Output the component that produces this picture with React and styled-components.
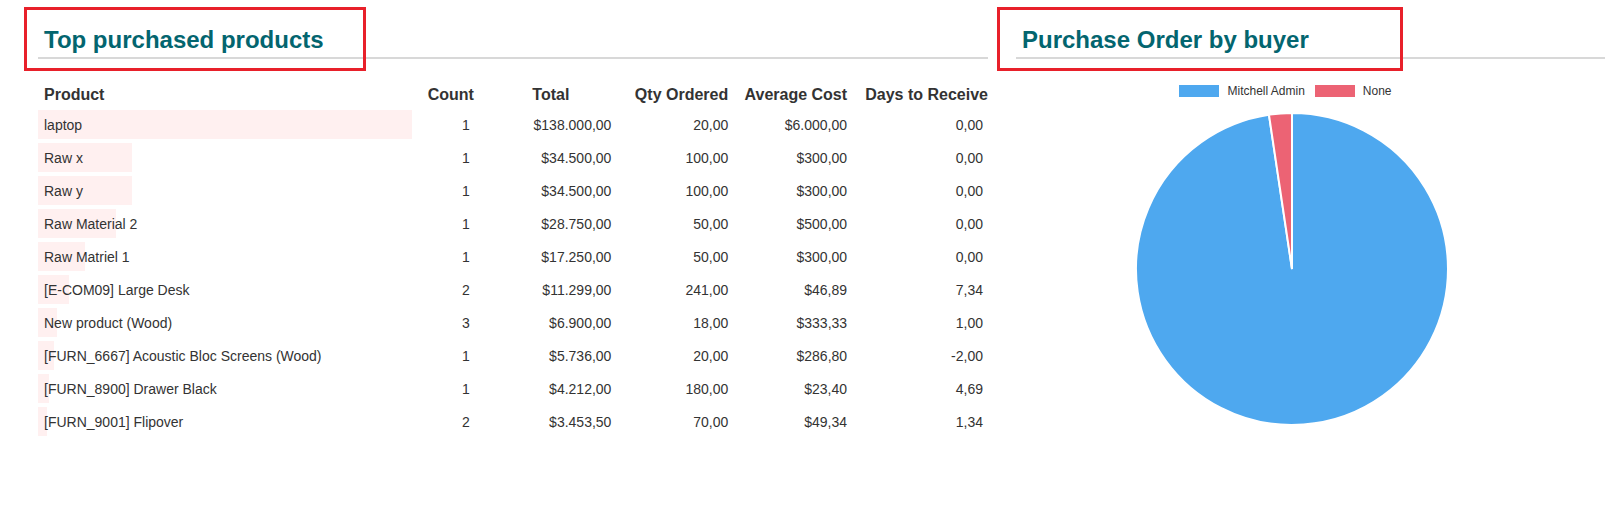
import React from 'react';
import styled, { createGlobalStyle } from 'styled-components';

const Global = createGlobalStyle`
  body { margin: 0; background: #fff; font-family: "Liberation Sans", Arial, sans-serif; color: #333; }
`;

const Page = styled.div`
  display: flex;
  width: 1605px;
  height: 507px;
  padding-top: 21px;
  box-sizing: border-box;
`;

const Section = styled.div`
  width: ${(p) => p.w}px;
  margin-left: ${(p) => p.ml}px;
`;

const TitleBar = styled.div`
  position: relative;
  border-bottom: 2px solid #d8d8d8;
  padding: 5px 0 0 6px;
  height: 31px;
`;

const Title = styled.h2`
  margin: 0;
  font-size: 24px;
  font-weight: bold;
  color: #03656f;
`;

const Mark = styled.div`
  position: absolute;
  left: ${(p) => p.l}px;
  top: -14px;
  width: ${(p) => p.w}px;
  height: 58px;
  border: 3px solid #e8202a;
`;

const Table = styled.table`
  border-collapse: collapse;
  margin-top: 27px;
  font-size: 14px;
  width: 950px;
`;

const Th = styled.th`
  font-size: 16px;
  font-weight: bold;
  color: #333;
  text-align: ${(p) => p.align || 'right'};
  padding: 0 ${(p) => p.pr || 0}px 4px ${(p) => p.pl || 0}px;
  width: ${(p) => p.w}px;
  white-space: nowrap;
`;

const Td = styled.td`
  height: 33px;
  padding: 0 ${(p) => p.pr || 0}px 0 0;
  text-align: right;
  white-space: nowrap;
`;

const NameCell = styled.td`
  position: relative;
  height: 33px;
  text-align: left;
  padding: 0 0 0 6px;
`;

const Bar = styled.div`
  position: absolute;
  left: 0;
  top: 2px;
  bottom: 2px;
  background: #fff0f0;
  z-index: 0;
`;

const Label = styled.span`
  position: relative;
`;

const Legend = styled.div`
  display: flex;
  justify-content: center;
  gap: 10px;
  margin: 25px 0 13px 0;
  font-size: 12px;
  color: #333;
  padding-right: 50px;
`;

const LegendItem = styled.div`
  display: flex;
  align-items: center;
  gap: 8px;
`;

const Swatch = styled.span`
  width: 40px;
  height: 12px;
  background: ${(p) => p.c};
`;

const ChartWrap = styled.div`
  display: flex;
  justify-content: center;
  padding-right: 38px;
`;

const rows = [
  ['laptop', 1, '$138.000,00', '20,00', '$6.000,00', '0,00', 138000],
  ['Raw x', 1, '$34.500,00', '100,00', '$300,00', '0,00', 34500],
  ['Raw y', 1, '$34.500,00', '100,00', '$300,00', '0,00', 34500],
  ['Raw Material 2', 1, '$28.750,00', '50,00', '$500,00', '0,00', 28750],
  ['Raw Matriel 1', 1, '$17.250,00', '50,00', '$300,00', '0,00', 17250],
  ['[E-COM09] Large Desk', 2, '$11.299,00', '241,00', '$46,89', '7,34', 11299],
  ['New product (Wood)', 3, '$6.900,00', '18,00', '$333,33', '1,00', 6900],
  ['[FURN_6667] Acoustic Bloc Screens (Wood)', 1, '$5.736,00', '20,00', '$286,80', '-2,00', 5736],
  ['[FURN_8900] Drawer Black', 1, '$4.212,00', '180,00', '$23,40', '4,69', 4212],
  ['[FURN_9001] Flipover', 2, '$3.453,50', '70,00', '$49,34', '1,34', 3453.5],
];

function Pie() {
  const r = 156;
  const c = 158;
  const a = (8.5 * Math.PI) / 180;
  const x = c - r * Math.sin(a);
  const y = c - r * Math.cos(a);
  return (
    <svg width="316" height="316" viewBox="0 0 316 316">
      <path d={`M${c} ${c} L${c} ${c - r} A${r} ${r} 0 1 1 ${x} ${y} Z`} fill="#4ea8ef" stroke="#fff" strokeWidth="2" />
      <path d={`M${c} ${c} L${x} ${y} A${r} ${r} 0 0 1 ${c} ${c - r} Z`} fill="#ec6374" stroke="#fff" strokeWidth="2" />
    </svg>
  );
}

export default function App() {
  return (
    <>
      <Global />
      <Page>
        <Section w={950} ml={38}>
          <TitleBar>
            <Title>Top purchased products</Title>
            <Mark l={-14} w={336} />
          </TitleBar>
          <Table>
            <thead>
              <tr>
                <Th align="left" pl={6} w={370}>Product</Th>
                <Th w={62} pr={0}>Count</Th>
                <Th w={96} pr={42}>Total</Th>
                <Th w={117}>Qty Ordered</Th>
                <Th w={119}>Average Cost</Th>
                <Th w={141}>Days to Receive</Th>
              </tr>
            </thead>
            <tbody>
              {rows.map((r) => (
                <tr key={r[0]}>
                  <NameCell>
                    <Bar style={{ width: Math.max(6, (r[6] / 138000) * 374) }} />
                    <Label>{r[0]}</Label>
                  </NameCell>
                  <Td pr={4}>{r[1]}</Td>
                  <Td pr={0}>{r[2]}</Td>
                  <Td>{r[3]}</Td>
                  <Td>{r[4]}</Td>
                  <Td pr={5}>{r[5]}</Td>
                </tr>
              ))}
            </tbody>
          </Table>
        </Section>
        <Section w={589} ml={28}>
          <TitleBar>
            <Title>Purchase Order by buyer</Title>
            <Mark l={-19} w={400} />
          </TitleBar>
          <Legend>
            <LegendItem><Swatch c="#4ea8ef" />Mitchell Admin</LegendItem>
            <LegendItem><Swatch c="#ec6374" />None</LegendItem>
          </Legend>
          <ChartWrap><Pie /></ChartWrap>
        </Section>
      </Page>
    </>
  );
}
